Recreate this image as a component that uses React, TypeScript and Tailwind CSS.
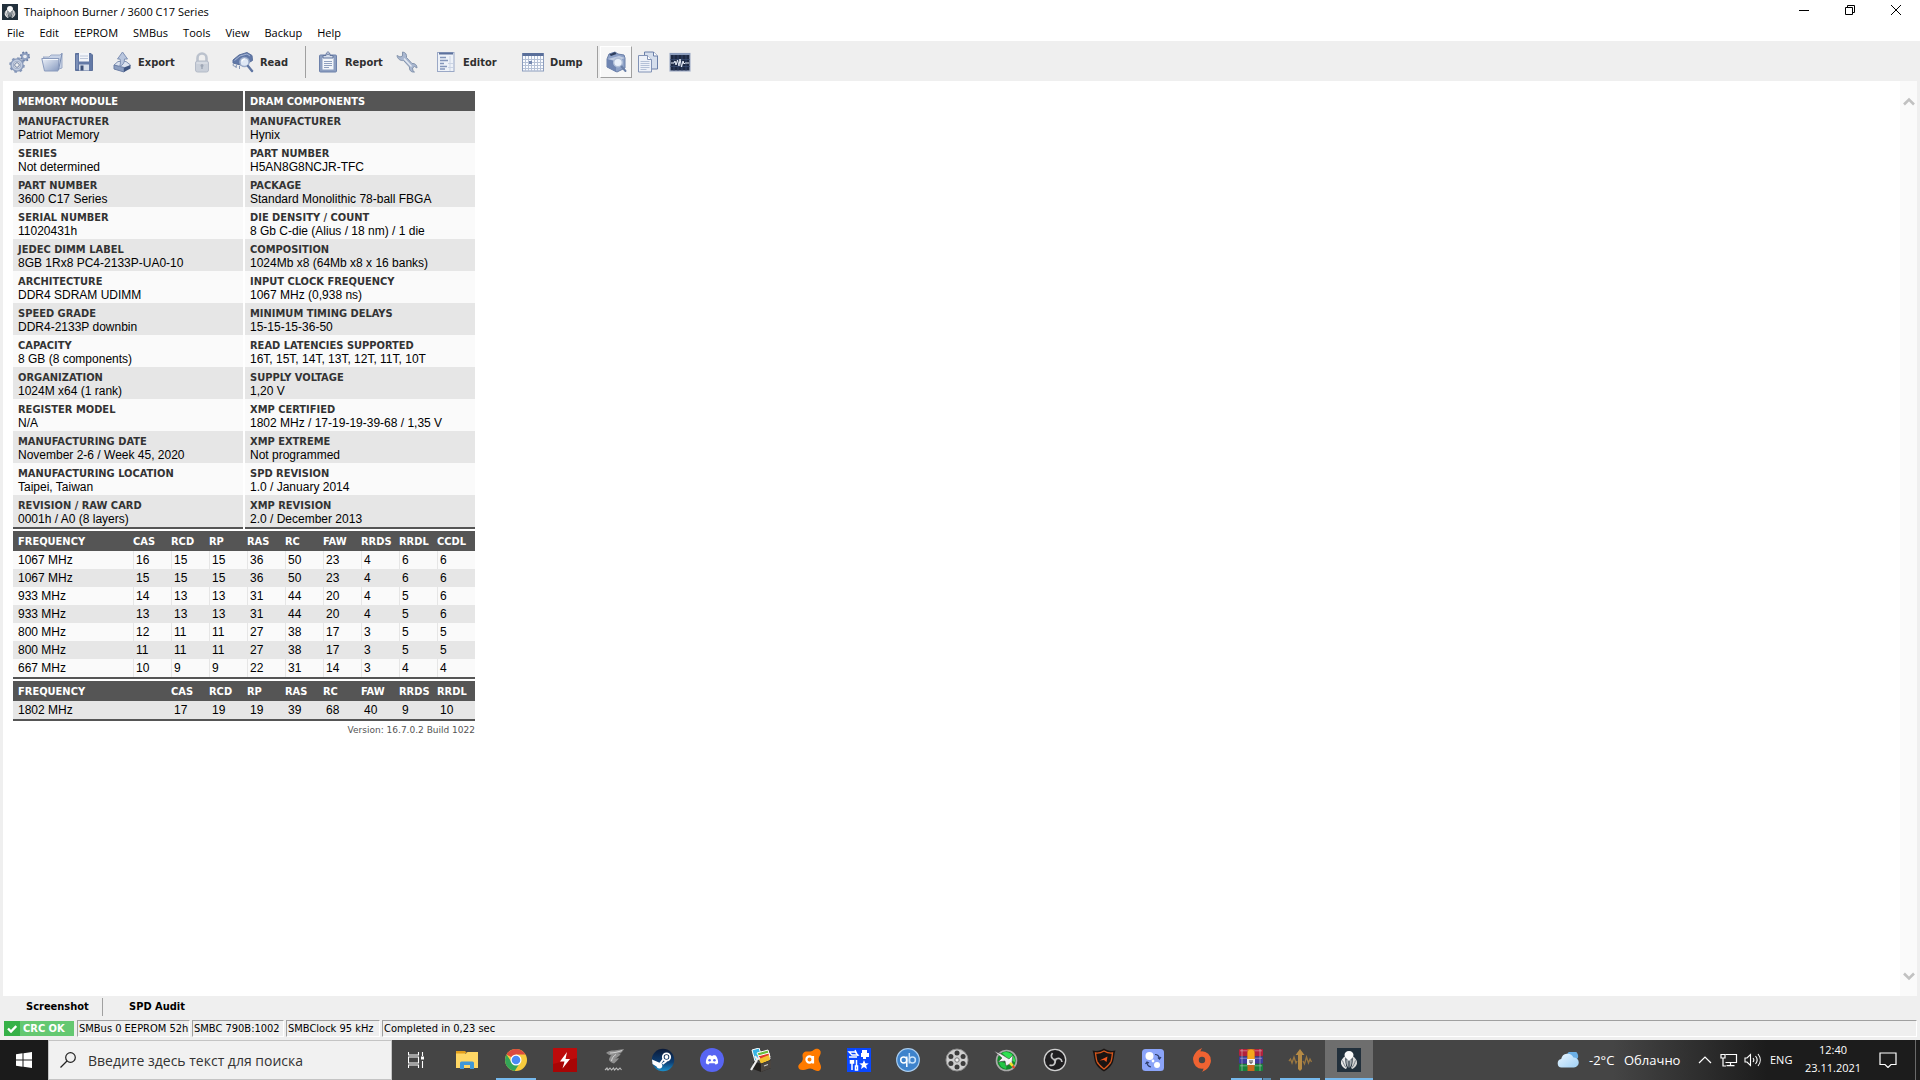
import type { ReactNode } from "react";
import clsx from "clsx";

const UI_FONT = "font-['Open_Sans','Noto_Sans',sans-serif]";
const TAHOMA = "font-['DejaVu_Sans_Condensed','DejaVu_Sans',sans-serif]";
const ARIAL = "font-['Liberation_Sans',Arial,sans-serif]";

const menuItems = ["File", "Edit", "EEPROM", "SMBus", "Tools", "View", "Backup", "Help"];

const memoryModule: [string, string][] = [
  ["MANUFACTURER", "Patriot Memory"],
  ["SERIES", "Not determined"],
  ["PART NUMBER", "3600 C17 Series"],
  ["SERIAL NUMBER", "11020431h"],
  ["JEDEC DIMM LABEL", "8GB 1Rx8 PC4-2133P-UA0-10"],
  ["ARCHITECTURE", "DDR4 SDRAM UDIMM"],
  ["SPEED GRADE", "DDR4-2133P downbin"],
  ["CAPACITY", "8 GB (8 components)"],
  ["ORGANIZATION", "1024M x64 (1 rank)"],
  ["REGISTER MODEL", "N/A"],
  ["MANUFACTURING DATE", "November 2-6 / Week 45, 2020"],
  ["MANUFACTURING LOCATION", "Taipei, Taiwan"],
  ["REVISION / RAW CARD", "0001h / A0 (8 layers)"],
];

const dramComponents: [string, string][] = [
  ["MANUFACTURER", "Hynix"],
  ["PART NUMBER", "H5AN8G8NCJR-TFC"],
  ["PACKAGE", "Standard Monolithic 78-ball FBGA"],
  ["DIE DENSITY / COUNT", "8 Gb C-die (Alius / 18 nm) / 1 die"],
  ["COMPOSITION", "1024Mb x8 (64Mb x8 x 16 banks)"],
  ["INPUT CLOCK FREQUENCY", "1067 MHz (0,938 ns)"],
  ["MINIMUM TIMING DELAYS", "15-15-15-36-50"],
  ["READ LATENCIES SUPPORTED", "16T, 15T, 14T, 13T, 12T, 11T, 10T"],
  ["SUPPLY VOLTAGE", "1,20 V"],
  ["XMP CERTIFIED", "1802 MHz / 17-19-19-39-68 / 1,35 V"],
  ["XMP EXTREME", "Not programmed"],
  ["SPD REVISION", "1.0 / January 2014"],
  ["XMP REVISION", "2.0 / December 2013"],
];

const jedecColumns = ["CAS", "RCD", "RP", "RAS", "RC", "FAW", "RRDS", "RRDL", "CCDL"];
const jedecTimings = [
  { frequency: "1067 MHz", values: [16, 15, 15, 36, 50, 23, 4, 6, 6] },
  { frequency: "1067 MHz", values: [15, 15, 15, 36, 50, 23, 4, 6, 6] },
  { frequency: "933 MHz", values: [14, 13, 13, 31, 44, 20, 4, 5, 6] },
  { frequency: "933 MHz", values: [13, 13, 13, 31, 44, 20, 4, 5, 6] },
  { frequency: "800 MHz", values: [12, 11, 11, 27, 38, 17, 3, 5, 5] },
  { frequency: "800 MHz", values: [11, 11, 11, 27, 38, 17, 3, 5, 5] },
  { frequency: "667 MHz", values: [10, 9, 9, 22, 31, 14, 3, 4, 4] },
];

const xmpColumns = ["CAS", "RCD", "RP", "RAS", "RC", "FAW", "RRDS", "RRDL"];
const xmpTimings = [{ frequency: "1802 MHz", values: [17, 19, 19, 39, 68, 40, 9, 10] }];

/* ---------- Logo ---------- */

function AppLogo({ className }: { className: string }) {
  return (
    <svg viewBox="0 0 24 24" className={className} aria-hidden="true">
      <rect width="24" height="24" fill="#22303c" />
      <path d="M8.500 8C5.500 10 3.500 12.500 4 15.500c.4 2 2 4 4.500 5.500l1.500-1C8.500 17 8 12.500 8.500 8z" fill="#e8e8e8" />
      <path d="M15.500 8c3 2 5 4.500 4.500 7.500-.4 2-2 4-4.500 5.500l-1.500-1c1.500-3 2-7.500 1.500-12z" fill="#d6d6d6" />
      <path d="M9.500 11c-.8 3 0 6.500 2 9V12zM14.500 11c.8 3 0 6.500-2 9V12z" fill="#a7adb2" />
      <path d="M12 3c2.800 0 4.500 1.800 4.500 4 0 2.500-2.500 4-4.500 6-2-2-4.500-3.500-4.500-6 0-2.200 1.700-4 4.500-4z" fill="#fafafa" />
      <path d="M5.500 12.500c1 3 2 5 3.500 7M18.500 12.500c-1 3-2 5-3.500 7" stroke="#56616b" strokeWidth=".8" fill="none" />
    </svg>
  );
}

/* ---------- Toolbar icons ---------- */

function ToolIcon({ children, faded }: { children: ReactNode; faded?: boolean }) {
  return (
    <svg viewBox="0 0 22 22" className={clsx("size-[22px] shrink-0", faded && "opacity-60")} fill="none" aria-hidden="true">
      {children}
    </svg>
  );
}

const GearsIcon = () => (
  <ToolIcon>
    <circle cx="8" cy="14" r="5" stroke="#8c9cbb" strokeWidth="3.500" />
    <circle cx="8" cy="14" r="6.800" stroke="#8496b8" strokeWidth="2" strokeDasharray="2.600 2.740" />
    <circle cx="8" cy="14" r="4.600" stroke="#c0cbdf" strokeWidth="1.600" />
    <circle cx="8" cy="14" r="2.300" fill="#efefef" stroke="#6a7da1" />
    <circle cx="16" cy="5.500" r="3" stroke="#8fa0c0" strokeWidth="2.400" />
    <circle cx="16" cy="5.500" r="4.300" stroke="#6a7ea5" strokeWidth="1.500" strokeDasharray="1.700 1.700" />
    <circle cx="16" cy="5.500" r="1.400" fill="#e8ecf4" />
  </ToolIcon>
);

const FolderIcon = () => (
  <ToolIcon>
    <path d="M2 6h6l2-2h9l2-2v15l-3 1z" fill="#c7d2e6" stroke="#9dabc7" />
    <path d="M.800 7.500H18L17 20H3.500z" fill="url(#folderFront)" stroke="#8a9bbd" />
    <path d="M2 8.500h15" stroke="#f4f7fb" />
    <path d="M21 2.500 17.500 19" stroke="#7b8eb3" />
    <defs>
      <linearGradient id="folderFront" x1="0" y1="0" x2="1" y2="1">
        <stop stopColor="#eef2f9" />
        <stop offset="1" stopColor="#8599bf" />
      </linearGradient>
    </defs>
  </ToolIcon>
);

const SaveIcon = () => (
  <ToolIcon>
    <path d="M2.500 2.500h15.500l1.500 1.500v15.500h-17z" fill="#6379a6" stroke="#5d719b" />
    <rect x="6" y="2" width="10" height="8.500" fill="#f3f5f9" />
    <path d="M7 5h8M7 7.500h8" stroke="#bcc6d9" />
    <rect x="6" y="13.500" width="10" height="6" fill="#d7deea" />
    <rect x="7.500" y="14.500" width="3" height="5" fill="#3d5078" />
    <path d="M4 4v14" stroke="#94a6c8" />
  </ToolIcon>
);

const ExportIcon = () => (
  <ToolIcon>
    <path d="m4 14 4-3.500h8l4.500 3.500-6.500 6.500z" fill="#dbe2ee" stroke="#8292b2" />
    <path d="m4 14 10 2.500V21L4 18z" fill="#8c9ec0" stroke="#6b7ea5" />
    <path d="m14 16.500 6.500-2.500v3.500L14 21z" fill="#3f5580" />
    <path d="M12.500 1 17.500 8h-3c0 4-1.500 6-5 7.500 1.200-2.500 1.200-4.500.5-7.500H7.500z" fill="#b9c6de" stroke="#7f91b4" />
  </ToolIcon>
);

const LockIcon = () => (
  <ToolIcon faded>
    <path d="M6.500 11V7a4.500 4.500 0 0 1 9 0v4" stroke="#9aa5b8" strokeWidth="2.600" />
    <rect x="4.500" y="10" width="13" height="11" rx="2" fill="#b0bacb" stroke="#8e9aaf" />
    <path d="M5.500 12h11" stroke="#dfe4ec" />
    <circle cx="11" cy="14.500" r="1.500" fill="#6a7890" />
    <path d="M11 15v3" stroke="#6a7890" strokeWidth="1.500" />
  </ToolIcon>
);

const ReadIcon = () => (
  <ToolIcon>
    <path d="M1 9 7 4l8-2.500 5 3 .5 5-7 4-5 .5L1 12z" fill="#6178a7" stroke="#5a709c" />
    <path d="m2.500 9.500 5.500-4.500L15 3l3 2" stroke="#a5b6d6" />
    <path d="m1.500 12-.5 2.500 3.500 1.500M4.500 13.500 4 17M7.500 15v3" stroke="#8797b6" />
    <circle cx="12.500" cy="11" r="4.600" fill="#dfe8f5" stroke="#9aabc9" strokeWidth="1.500" />
    <path d="M10 10.500a3 3 0 0 1 3-2.500" stroke="#fff" strokeWidth="1.200" />
    <path d="m16 15 4 5" stroke="#5f75a2" strokeWidth="2.400" strokeLinecap="round" />
  </ToolIcon>
);

const ReportIcon = () => (
  <ToolIcon>
    <rect x="2.500" y="4" width="17" height="17" rx="1" fill="#8c9ec0" stroke="#6d81aa" />
    <path d="M5.500 6.500h11v12h-11z" fill="#f3f6fa" />
    <path d="M7 10.500h8M7 12.500h8M7 14.500h8M7 16.500h5" stroke="#8fa0bf" />
    <path d="M6 7V4.500h3C9 2 10 1 11 1s2 1 2 3.500h3V7z" fill="#d4dcea" stroke="#60749d" />
    <circle cx="11" cy="3.300" r=".8" fill="#4e638e" />
  </ToolIcon>
);

const WrenchIcon = () => (
  <ToolIcon>
    <path
      d="M1 4.500 4 6l2.500-1L6.500 1c3 .2 4.500 2.500 4 5.500l5.500 6c3-.3 5 1.500 5 4.500l-2.500-1.500-2 1.500.500 3 1.500 1c-3.500.5-5.500-2-5-5l-6-6.500C4.500 10 1.500 8 1 4.500z"
      fill="#a9b7d0"
      stroke="#8494ad"
    />
    <path d="m8 7.500 7.500 8" stroke="#e6ebf3" strokeWidth="1.300" />
  </ToolIcon>
);

const EditorIcon = () => (
  <ToolIcon>
    <rect x="2.500" y="1.500" width="16.500" height="19" fill="#eef2f8" stroke="#9aa8c6" />
    <path d="M4 2.500h14" stroke="#5c719c" strokeWidth="2" />
    <path d="M5 6.500h6M5 9.500h8M5 12.500h4M5 15.500h7M5 18h5" stroke="#8496ba" strokeWidth="1.400" />
    <path d="M15 5v15M13 12.500h5M13 16.500h5" stroke="#cbd4e4" />
  </ToolIcon>
);

const DumpIcon = () => (
  <ToolIcon>
    <rect x=".5" y="2.500" width="21" height="17.500" fill="#fafcff" stroke="#8c9dbd" />
    <path d="M.5 3.500h21" stroke="#5a6f9a" strokeWidth="3" />
    <path d="M1 8.500h20M1 11.500h20M1 14.500h20M1 17.500h20M3.500 5v15M6.500 5v15M9.500 5v15M12.500 5v15M15.500 5v15M18.500 5v15" stroke="#b5c1d6" />
    <rect x="7" y="10" width="3" height="3" fill="#7488b0" />
  </ToolIcon>
);

const ScreenshotIcon = () => (
  <ToolIcon>
    <path d="m2 8 2-5 6-2L13 3l6 1 1 3v10l-8 4-10-5z" fill="#8ea2c8" stroke="#6b80a8" />
    <path d="m4.500 3.500 5.500-2.500L11.500 3 6 5z" fill="#2d3d5c" />
    <path d="m2 8 9 2.500V21L2 16z" fill="#6f85b2" />
    <path d="m3 8 8 2 9-3-6-2z" fill="#c2cee2" />
    <circle cx="13" cy="11.500" r="4.300" fill="#e9f0fa" stroke="#b2c0d8" strokeWidth="1.400" />
    <path d="m16.500 15.500 4 4.500" stroke="#6b80a8" strokeWidth="2" strokeLinecap="round" />
  </ToolIcon>
);

const CopyIcon = () => (
  <ToolIcon>
    <path d="M7.500 1h9l4 4v13h-13z" fill="#d5deec" stroke="#6a7fa8" />
    <path d="M16.500 1v4h4" fill="#fff" stroke="#6a7fa8" />
    <path d="M1.500 4.500h9l4 4V21h-13z" fill="#edf1f8" stroke="#8293b6" />
    <path d="M10.500 4.500v4h4" fill="#fff" stroke="#8293b6" />
    <path d="M3.500 10.500h9M3.500 12.500h9M3.500 14.500h9M3.500 16.500h9M3.500 18.500h6" stroke="#b4c1d7" />
  </ToolIcon>
);

const WaveIcon = () => (
  <ToolIcon>
    <rect x="1" y="2.500" width="20" height="17.500" fill="#1d2942" stroke="#a3b0c8" strokeWidth="1.200" />
    <path d="M1 3h20" stroke="#8c9dbd" strokeWidth="2" />
    <path d="M5 4v16M9 4v16M13 4v16M17 4v16M1 8.500h20M1 15.500h20" stroke="#3c4f75" strokeWidth=".7" />
    <path d="M2 12h3l1-2 1 4 1.500-5 1.500 6 1-7 1.500 8 1.500-6 1 3 1-1h4" stroke="#e8eef8" />
  </ToolIcon>
);

/* ---------- Window parts ---------- */

function TitleBar() {
  return (
    <header className="flex h-6 items-center bg-white pl-0.5">
      <AppLogo className="size-4" />
      <h1 className="ml-1.5 flex-1 text-[11px] leading-4">Thaiphoon Burner / 3600 C17 Series</h1>
      <div className="flex self-start pr-px">
        <button aria-label="Minimize" className="flex h-5 w-[46px] items-center justify-center">
          <svg viewBox="0 0 10 10" className="size-2.5" stroke="#000">
            <path d="M0 5.500h10" />
          </svg>
        </button>
        <button aria-label="Restore" className="flex h-5 w-[46px] items-center justify-center">
          <svg viewBox="0 0 10 10" className="size-2.5" fill="none" stroke="#000">
            <path d="M.5 2.500h7v7h-7zM2.500 2.500v-2h7v7h-2" />
          </svg>
        </button>
        <button aria-label="Close" className="flex h-5 w-[46px] items-center justify-center">
          <svg viewBox="0 0 10 10" className="size-2.5" stroke="#000">
            <path d="m0 0 10 10M10 0 0 10" />
          </svg>
        </button>
      </div>
    </header>
  );
}

function MenuBar() {
  return (
    <nav className="flex h-[17px] items-center gap-[15px] bg-white pl-[7px] text-[11px] leading-4">
      {menuItems.map((item) => (
        <button key={item}>{item}</button>
      ))}
    </nav>
  );
}

function ToolButton({ icon, label, text, className }: { icon: ReactNode; label: string; text?: boolean; className?: string }) {
  return (
    <button
      aria-label={label}
      className={clsx("flex h-8 shrink-0 items-center gap-1.5", text ? "pl-1.5" : "w-8 justify-center", className)}
    >
      {icon}
      {text && <span className="pt-0.5">{label}</span>}
    </button>
  );
}

function Toolbar() {
  return (
    <div className={clsx("flex h-10 items-center bg-[#efefef] pt-0.5 pl-1 text-[11px] font-bold text-[#2f2f2f]", TAHOMA)}>
      <ToolButton icon={<GearsIcon />} label="Options" />
      <ToolButton icon={<FolderIcon />} label="Open" />
      <ToolButton icon={<SaveIcon />} label="Save" />
      <ToolButton icon={<ExportIcon />} label="Export" text className="ml-1 w-20" />
      <ToolButton icon={<LockIcon />} label="Lock" className="ml-0.5" />
      <ToolButton icon={<ReadIcon />} label="Read" text className="ml-2 w-[79px]" />
      <div className="h-8 w-px bg-[#a0a0a0]" />
      <ToolButton icon={<ReportIcon />} label="Report" text className="ml-[5px] w-20" />
      <ToolButton icon={<WrenchIcon />} label="Tools" />
      <ToolButton icon={<EditorIcon />} label="Editor" text className="ml-1.5 w-20" />
      <ToolButton icon={<DumpIcon />} label="Dump" text className="ml-[7px] w-[81px]" />
      <div className="h-8 w-px bg-[#a0a0a0]" />
      <ToolButton
        icon={<ScreenshotIcon />}
        label="Screenshot view"
        className="ml-0.5 border border-white border-r-[#a0a0a0] border-b-[#a0a0a0] bg-[#f7f7f7]"
      />
      <ToolButton icon={<CopyIcon />} label="Copy" />
      <ToolButton icon={<WaveIcon />} label="Monitor" />
    </div>
  );
}

/* ---------- Report ---------- */

const HEAD_ROW = "h-5 bg-[#555] text-left text-[11px] leading-4 font-bold text-white";
const TABLE = "border-separate border-spacing-0 border-b-2 border-[#555]";

function InfoTable({ title, rows }: { title: string; rows: [string, string][] }) {
  return (
    <table className={clsx("flex-1", TABLE)}>
      <thead>
        <tr className={clsx(HEAD_ROW, TAHOMA)}>
          <th className="px-[5px] pt-0.5 pb-0">{title}</th>
        </tr>
      </thead>
      <tbody>
        {rows.map(([name, value]) => (
          <tr key={name} className="h-8 odd:bg-[#e6e6e6] even:bg-[#fafafa]">
            <td className="px-[5px] pt-1 pb-0 align-top">
              <div className={clsx("text-[11px] leading-[13px] font-bold text-[#333]", TAHOMA)}>{name}</div>
              <div className="text-xs leading-[14px]">{value}</div>
            </td>
          </tr>
        ))}
      </tbody>
    </table>
  );
}

type TimingRow = { frequency: string; values: number[] };

function TimingTable({ columns, rows, shadeFirst }: { columns: string[]; rows: TimingRow[]; shadeFirst?: boolean }) {
  return (
    <table className={clsx("w-full table-fixed", TABLE)}>
      <thead>
        <tr className={clsx(HEAD_ROW, TAHOMA)}>
          <th className="pt-0.5 pr-0 pb-0 pl-[5px]">FREQUENCY</th>
          {columns.map((column) => (
            <th key={column} className="w-[38px] px-0 pt-0.5 pb-0">
              {column}
            </th>
          ))}
        </tr>
      </thead>
      <tbody>
        {rows.map((row, index) => (
          <tr
            key={index}
            className={clsx("h-[18px] text-xs leading-4", (index % 2 === 0) === !!shadeFirst ? "bg-[#e6e6e6]" : "bg-[#fafafa]")}
          >
            <td className="py-0 pl-[5px]">{row.frequency}</td>
            {row.values.map((value, i) => (
              <td key={i} className="border-l border-[#e6e6e6] py-0 pl-0.5">
                {value}
              </td>
            ))}
          </tr>
        ))}
      </tbody>
    </table>
  );
}

function Report() {
  return (
    <main className="flex-1 overflow-hidden pt-2.5 pl-2.5">
      <div className={clsx("flex w-[462px] flex-col gap-0.5", ARIAL)}>
        <div className="flex gap-0.5">
          <InfoTable title="MEMORY MODULE" rows={memoryModule} />
          <InfoTable title="DRAM COMPONENTS" rows={dramComponents} />
        </div>
        <TimingTable columns={jedecColumns} rows={jedecTimings} />
        <TimingTable columns={xmpColumns} rows={xmpTimings} shadeFirst />
        <p className="text-right font-['DejaVu_Sans',sans-serif] text-[9px] leading-[14px] text-[#555]">Version: 16.7.0.2 Build 1022</p>
      </div>
    </main>
  );
}

function ScrollRail() {
  return (
    <div className="flex w-[17px] flex-col justify-between bg-[#fafafa] py-3">
      <button aria-label="Scroll up" className="flex h-4 items-center justify-center">
        <svg viewBox="0 0 12 9" className="h-[9px] w-3" fill="none" stroke="#c1c1c1" strokeWidth="2.600">
          <path d="m1 7.500 5-5 5 5" />
        </svg>
      </button>
      <button aria-label="Scroll down" className="flex h-4 items-center justify-center">
        <svg viewBox="0 0 12 9" className="h-[9px] w-3" fill="none" stroke="#c1c1c1" strokeWidth="2.600">
          <path d="m1 1.500 5 5 5-5" />
        </svg>
      </button>
    </div>
  );
}

const STATUS_PANEL = "h-[17px] shrink-0 border border-[#a0a0a0] border-r-white border-b-white pl-px whitespace-nowrap";

function StatusArea() {
  return (
    <footer className={clsx("bg-[#efefef] pb-[3px] text-[11px]", TAHOMA)}>
      <div className="flex h-6 items-center pt-0.5 pb-1 font-bold">
        <button className="w-[102px] pl-[26px] text-left">Screenshot</button>
        <div className="h-[18px] w-px bg-[#a0a0a0]" />
        <button className="pl-[26px]">SPD Audit</button>
      </div>
      <div className="flex gap-0.5 pr-[3px] pl-1 leading-4">
        <div className="mr-px flex h-[15px] w-[70px] self-center bg-[#64c871] leading-[15px] font-bold text-white">
          <span className="flex w-4 items-center justify-center bg-[#36b148]">
            <svg viewBox="0 0 10 8" className="h-2 w-2.5" fill="none" stroke="#fff" strokeWidth="2.400">
              <path d="m1 3.500 3 3L9.300 1" />
            </svg>
          </span>
          <span className="pl-[3px]">CRC OK</span>
        </div>
        <div className={clsx(STATUS_PANEL, "w-[113px]")}>SMBus 0 EEPROM 52h</div>
        <div className={clsx(STATUS_PANEL, "w-[92px]")}>SMBC 790B:1002</div>
        <div className={clsx(STATUS_PANEL, "w-[94px]")}>SMBClock 95 kHz</div>
        <div className={clsx(STATUS_PANEL, "flex-1")}>Completed in 0,23 sec</div>
      </div>
    </footer>
  );
}

/* ---------- Taskbar ---------- */

function AppIcon({ children }: { children: ReactNode }) {
  return (
    <svg viewBox="0 0 24 24" className="size-6" fill="none" aria-hidden="true">
      {children}
    </svg>
  );
}

const taskbarApps: { name: string; state?: "open" | "group" | "active"; icon: ReactNode }[] = [
  {
    name: "File Explorer",
    icon: (
      <AppIcon>
        <path d="M1 3h9l2 2h-2v4H1z" fill="#e39f1c" />
        <path d="M1 5.500h10L12.500 4H23v16H1z" fill="#ffd765" />
        <path d="M5 21v-6q0-1.500 1.500-1.500h11q1.500 0 1.500 1.500v6h-4v-4H9v4z" fill="#3f97d8" />
      </AppIcon>
    ),
  },
  {
    name: "Google Chrome",
    state: "open",
    icon: (
      <AppIcon>
        <circle cx="12" cy="12" r="11" fill="#f7cb3d" />
        <path d="M12 12 2.500 6.500A11 11 0 0 1 21.500 6.500H12z" fill="#dc4b3e" />
        <path d="M2.500 6.500a11 11 0 0 0 8.200 16.400L16.500 14l-9 0z" fill="#33a457" />
        <circle cx="12" cy="12" r="5.500" fill="#fff" />
        <circle cx="12" cy="12" r="4.300" fill="#4a8af4" />
      </AppIcon>
    ),
  },
  {
    name: "Flash",
    icon: (
      <AppIcon>
        <rect width="24" height="24" fill="#a80505" />
        <path d="M0 0h24v10L0 16z" fill="#bd0b0b" />
        <path d="m14 4-7 9.500h4.500L9.500 20.500 17 11h-4.500z" fill="#fff" />
      </AppIcon>
    ),
  },
  {
    name: "AORUS",
    icon: (
      <AppIcon>
        <path d="M4 5c2-2 5-2.500 8-2.500L22 1c-1.500 3-3.500 4.500-6 5 1 .2 2 0 3-.5-1.500 2.500-3.500 4-6 5l4-.3c-1.500 2-3 3.800-5 5.300-2-.5-4-1.500-5-3.500 0-2 1-3.500 2.500-4.500C7.500 7.500 6 6 4 5z" fill="#8f8f8f" />
        <path d="M8 5c4 0 8-1 12-2.500M9.500 13C10 10 11.500 8 14 6.500" stroke="#d8d8d8" strokeWidth=".9" />
        <path d="m3 22 2-2 1 2 2-2 1.500 2 2-2 1 2 2-2 1.500 2 2-2 1.500 2" stroke="#b8b8b8" strokeWidth="1.100" />
      </AppIcon>
    ),
  },
  {
    name: "Steam",
    icon: (
      <AppIcon>
        <circle cx="12" cy="12" r="11.200" fill="url(#steam)" />
        <circle cx="15.500" cy="9" r="3.700" stroke="#fff" strokeWidth="1.800" />
        <circle cx="15.500" cy="9" r="1.900" fill="#fff" />
        <path d="m12.500 11-3 4M15.500 13l-4 3" stroke="#fff" strokeWidth="2" />
        <path d="m1 11.500 7 3a3 3 0 1 1-2.500 4L1.500 16z" fill="#fff" />
        <defs>
          <linearGradient id="steam" x1="0" y1="0" x2="0" y2="1">
            <stop stopColor="#0b1a38" />
            <stop offset=".6" stopColor="#0d3f74" />
            <stop offset="1" stopColor="#1a90cc" />
          </linearGradient>
        </defs>
      </AppIcon>
    ),
  },
  {
    name: "Discord",
    icon: (
      <AppIcon>
        <circle cx="12" cy="12" r="12" fill="#5865f2" />
        <path d="M8.300 7.500 10.500 7l.4.800h2.200l.4-.8 2.200.5c1.800 2.200 2.600 5 2.400 7.700-1 .8-2 1.200-2.700 1.300l-.8-1.200H9.400l-.8 1.200c-.7-.1-1.700-.5-2.700-1.300-.2-2.700.6-5.500 2.400-7.700z" fill="#fff" />
        <circle cx="9.600" cy="12.300" r="1.300" fill="#5865f2" />
        <circle cx="14.400" cy="12.300" r="1.300" fill="#5865f2" />
      </AppIcon>
    ),
  },
  {
    name: "Total Uninstall",
    icon: (
      <AppIcon>
        <path d="m3 2 7-2 3 9-7 4z" fill="#37b5e6" stroke="#fff" />
        <path d="m8 5 11-3 2 7-9 4z" fill="#6abf3a" stroke="#fff" />
        <path d="m9 8 11-3 1 6-9 3z" fill="#e0392b" stroke="#fff" />
        <path d="m10 11 10-4 1 5-9 4z" fill="#f2c12e" />
        <path d="m4 14 8 1.500L22 12v8l-10 4-8-3z" fill="#24211f" />
        <path d="m12 16 10-4v8l-10 4z" fill="#4a4541" />
        <path d="m15 18 4-1.500" stroke="#ccc" strokeWidth="1.200" />
        <path d="m2 22 6-10" stroke="#eee" strokeWidth="2.200" />
        <path d="m6 8 2 3 3-1" stroke="#eee" strokeWidth="2" />
      </AppIcon>
    ),
  },
  {
    name: "Avast",
    icon: (
      <AppIcon>
        <path
          d="M6.500 4C9 2.500 12 4.500 15 2.500 17 .5 20 0 21.800 2c1.800 2 .7 4.500-.5 6.500-1.300 2.500-.5 4.500.7 7 1.500 3 1.500 5.500-.5 7-2.500 1.500-5-.5-7-1.500-3-1.500-6 .5-9 1C2.500 22.500.5 21 .3 19c-.2-2.500 2.200-3.500 3.700-5.500C5.500 11 4.500 9.500 4.500 7.500c0-1.500.7-2.800 2-3.500z"
          fill="#ff7b00"
        />
        <circle cx="11.500" cy="11.500" r="3.100" stroke="#fff" strokeWidth="2.200" />
        <path d="M15 8v7.500" stroke="#fff" strokeWidth="2.200" />
      </AppIcon>
    ),
  },
  {
    name: "Tweaker",
    icon: (
      <AppIcon>
        <rect width="24" height="24" fill="#0a48ff" />
        <path d="M2 4h6l3 3H5zM2 9h8M8 2l3 6" stroke="#fff" strokeWidth="1.300" />
        <path d="M15 2h5v3h2v4h-3v2h-3V9h-2V5h1z" fill="#fff" />
        <path d="M5 12v10M3.500 12v3h3v-3M9.500 12v6M8.500 18h2v4h-2z" stroke="#fff" strokeWidth="1.500" />
        <path d="m17 12 1.300 3.200 3.400.2-2.600 2.200.9 3.400-3-1.900-3 1.900.9-3.400-2.600-2.200 3.400-.2z" fill="#fff" />
      </AppIcon>
    ),
  },
  {
    name: "qBittorrent",
    icon: (
      <AppIcon>
        <circle cx="12" cy="12" r="11.300" fill="#3e83cc" stroke="#a9cdf0" strokeWidth="1.200" />
        <circle cx="7.700" cy="12" r="3" stroke="#fff" strokeWidth="1.500" />
        <path d="M10.800 8.500V19" stroke="#fff" strokeWidth="1.500" />
        <circle cx="16.400" cy="12" r="3" stroke="#c8e2fb" strokeWidth="1.500" />
        <path d="M13.300 5v10.500" stroke="#c8e2fb" strokeWidth="1.500" />
      </AppIcon>
    ),
  },
  {
    name: "Media Player",
    icon: (
      <AppIcon>
        <circle cx="12" cy="12" r="11" fill="#cfcfcf" />
        <circle cx="12" cy="12" r="11" stroke="#8d8d8d" />
        <circle cx="12" cy="5" r="2.500" fill="#3c3c3c" />
        <circle cx="12" cy="19" r="2.500" fill="#3c3c3c" />
        <circle cx="5.900" cy="8.500" r="2.500" fill="#3c3c3c" />
        <circle cx="18.100" cy="8.500" r="2.500" fill="#3c3c3c" />
        <circle cx="5.900" cy="15.500" r="2.500" fill="#3c3c3c" />
        <circle cx="18.100" cy="15.500" r="2.500" fill="#3c3c3c" />
        <circle cx="12" cy="12" r="2.200" fill="#f0f0f0" stroke="#777" />
      </AppIcon>
    ),
  },
  {
    name: "Game Booster",
    icon: (
      <AppIcon>
        <circle cx="12.500" cy="12.500" r="10" fill="#128a2a" stroke="#a9a9a9" strokeWidth="1.600" />
        <path d="M8 5a9 9 0 0 1 13 9l-7-3z" fill="#2fe052" />
        <path d="M5 13a8 8 0 0 0 7 8l1-5z" fill="#24c544" />
        <path d="m0 3 7 3 8 5 4-4-1 7 1 3-3-1-4 2-1-5-7 1 4-4z" fill="#f4f4f4" stroke="#444" strokeWidth=".6" />
        <path d="m16 15 3 3" stroke="#f0e02c" strokeWidth="2.500" />
        <path d="m18.500 18 2 2" stroke="#e5472a" strokeWidth="2" />
      </AppIcon>
    ),
  },
  {
    name: "OBS Studio",
    icon: (
      <AppIcon>
        <circle cx="12" cy="12" r="10.700" fill="#1f1e20" stroke="#d0d0d0" strokeWidth="1.300" />
        <path d="M12 12c-4-1-4.500-4.500-2.500-7M12 12c3-3 6.500-1.500 7 2M12 12c1 4-2 6.500-5.500 5" stroke="#c4c4c4" strokeWidth="1.700" />
        <circle cx="12" cy="12" r="1.500" fill="#c4c4c4" />
      </AppIcon>
    ),
  },
  {
    name: "Shield",
    icon: (
      <AppIcon>
        <path d="M.5 2.500C5 3.500 9 2.500 12 .5c3 2 7 3 11.500 2C22 6 22.500 9 21 14c-2 5-6 7.500-9 9.500C9 21.500 5 19 3 14 1.500 9 2 6 .5 2.500z" fill="#1a1412" />
        <path d="M3.500 5c3.500.5 6-.5 8.500-2 2.500 1.500 5 2.500 8.500 2-.5 3-.5 6-1.500 8.500-1.500 3.500-4.500 5.500-7 7.500-2.500-2-5.500-4-7-7.500C4 11 4 8 3.500 5z" stroke="#d9571c" strokeWidth="1.300" />
        <path d="m7.500 12.500 8-4-1 5.500-2.500-2z" fill="#f0561d" />
      </AppIcon>
    ),
  },
  {
    name: "Converter",
    icon: (
      <AppIcon>
        <rect x="1" y="1" width="22" height="22" rx="3.500" fill="#8ba4f9" />
        <circle cx="8.500" cy="8" r="4" fill="#fff" />
        <circle cx="16" cy="17" r="3" fill="#fff" />
        <circle cx="12" cy="13" r="1.400" fill="#fff" />
        <path d="M14 6.500c2.500 0 4 1.500 4.500 4M17 9.500l1.500 1.500 1.500-2M6 14c0 3 1.500 4.500 4 5M4.500 16 6 14l2 1" stroke="#2d3c68" strokeWidth="1.200" />
      </AppIcon>
    ),
  },
  {
    name: "Origin",
    icon: (
      <AppIcon>
        <circle cx="12" cy="12" r="6" stroke="#ef6332" strokeWidth="5.600" />
        <path d="M3.200 12C3 7 6.500 2 12.300 0c-1.500 1.500-2 3-1.500 4.500L8 10z" fill="#ef6332" />
        <path d="M20.800 12c.2 5-3.300 10-9.100 12 1.500-1.500 2-3 1.500-4.500L16 14z" fill="#ef6332" />
      </AppIcon>
    ),
  },
  {
    name: "WinRAR",
    state: "group",
    icon: (
      <AppIcon>
        <rect y="1" width="24" height="7" rx="1" fill="#b3213c" />
        <rect y="8.500" width="24" height="7" rx="1" fill="#3d3c9e" />
        <rect y="16" width="24" height="7" rx="1" fill="#17803c" />
        <path d="M1 2.800h22M1 10.300h22M1 17.800h22" stroke="#fff" strokeOpacity=".35" />
        <path d="M3 1v22M21 1v22" stroke="#d9d9d9" strokeOpacity=".5" />
        <rect x="8.500" y="1" width="7" height="22" fill="#c96a1e" />
        <path d="M8.500 5a3.500 3.500 0 0 1 7 0v6h-7z" fill="#f5a81c" />
        <rect x="8" y="11" width="8" height="6" fill="#f4f4f4" />
        <path d="M11 12v3h2v-3" stroke="#444" />
      </AppIcon>
    ),
  },
  {
    name: "Monitor",
    state: "open",
    icon: (
      <AppIcon>
        <path d="m12 1 4.500 6H14v14l-2 2-2-2V7H7.500z" fill="#b58a45" />
        <path d="m1 13 1.500-2L4 15l2-6 2 6 1-2M15 13l1.500 3 2-7 2 6 1.500-4 1.500 3" stroke="#9a7740" strokeWidth="1.300" />
      </AppIcon>
    ),
  },
  { name: "Thaiphoon Burner", state: "active", icon: <AppLogo className="size-6" /> },
];

function TaskbarButton({ name, state, icon }: (typeof taskbarApps)[number]) {
  return (
    <button aria-label={name} className={clsx("flex h-10 w-12 shrink-0 flex-col items-center pt-2", state === "active" && "bg-[#6e6e6e]")}>
      {icon}
      {state && (
        <span className={clsx("mt-auto flex h-0.5 gap-px", state === "active" ? "w-12" : "w-10")}>
          <span className="flex-1 bg-[#76b9ed]" />
          {state === "group" && <span className="w-2 bg-[#5a8bb0]" />}
        </span>
      )}
    </button>
  );
}

function Taskbar() {
  return (
    <div className="flex h-10 items-center bg-[linear-gradient(90deg,#454545_84%,#1c1c1c_92%)] text-white">
      <button aria-label="Start" className="flex h-10 w-12 shrink-0 items-center justify-center bg-[#1b1b1b]">
        <svg viewBox="0 0 16 16" className="size-4" fill="#fff">
          <path d="M0 2.200 6.500 1.300v6.200H0zM7.500 1.200 16 0v7.500H7.500zM0 8.500h6.500v6.200L0 13.800zM7.500 8.500H16V16l-8.500-1.200z" />
        </svg>
      </button>
      <label className="flex h-10 w-[344px] shrink-0 items-center border border-[#c4c4c4] bg-[#f1f1f1] pl-[11px] text-[#333]">
        <svg viewBox="0 0 16 16" className="size-4 shrink-0" fill="none" stroke="#222" strokeWidth="1.200">
          <circle cx="10.500" cy="5.500" r="4.800" />
          <path d="M7 9 .5 15.500" />
        </svg>
        <input
          type="text"
          aria-label="Поиск"
          placeholder="Введите здесь текст для поиска"
          className="ml-3 w-full bg-transparent pt-0.5 text-sm outline-none placeholder:text-[#333]"
        />
      </label>
      <button aria-label="Task View" className="mr-[3px] flex h-10 w-12 shrink-0 items-center justify-center">
        <svg viewBox="0 0 16 16" className="size-4" fill="none" stroke="#fff" strokeWidth="1.100">
          <path d="M.5 0v3h10V0M.5 16v-3h10v3M.5 5h10v6H.5zM14.500 0v4M14.500 9v7" />
          <path d="M13 4.500h3v3h-3z" fill="#fff" stroke="none" />
        </svg>
      </button>
      <div className="flex flex-1 gap-px">
        {taskbarApps.map((app) => (
          <TaskbarButton key={app.name} {...app} />
        ))}
      </div>
      <button className="flex shrink-0 items-center text-[13px]">
        <svg viewBox="0 0 22 16" className="mr-2.5 h-4 w-[22px]">
          <defs>
            <linearGradient id="cloud" x1="0" y1="0" x2="1" y2="1">
              <stop stopColor="#e8f5ff" />
              <stop offset="1" stopColor="#9fd0f5" />
            </linearGradient>
          </defs>
          <path d="M10 3a5.500 5.500 0 0 1 11 2.500l-2 3z" fill="#6aaee4" />
          <path d="M4.500 15.500a4.300 4.300 0 0 1-.3-8.500A6.500 6.500 0 0 1 16.500 5.500 5 5 0 0 1 17 15.500z" fill="url(#cloud)" />
        </svg>
        <span className="w-[35px] pt-0.5 text-left">-2°C</span>
        <span className="w-[58px] pt-0.5 text-left">Облачно</span>
      </button>
      <button aria-label="Show hidden icons" className="ml-4 shrink-0">
        <svg viewBox="0 0 14 8" className="h-2 w-3.5" fill="none" stroke="#fff" strokeWidth="1.200">
          <path d="m1 7 6-6 6 6" />
        </svg>
      </button>
      <button aria-label="Network" className="ml-2 shrink-0">
        <svg viewBox="0 0 18 14" className="h-3.5 w-[18px]" fill="none" stroke="#fff" strokeWidth="1.200">
          <path d="M5.500 1.500h11v8h-11M10.500 9.500v3M6.500 12.700h8" />
          <path d="M1 1.500h4v3.500H1zM3 5v8h3" />
        </svg>
      </button>
      <button aria-label="Volume" className="ml-1.5 shrink-0">
        <svg viewBox="0 0 18 14" className="h-3.5 w-[18px]" fill="none" stroke="#fff" strokeWidth="1.100">
          <path d="M1 5h2l3.500-3.500v11L3 9H1zM9 5c1 1.200 1 2.800 0 4M11.500 3c2 2.400 2 5.600 0 8M14 1c3 3.600 3 8.400 0 12" />
        </svg>
      </button>
      <button className="ml-2 w-[34px] shrink-0 text-left text-[11px]">ENG</button>
      <button className="w-[58px] shrink-0 pb-0.5 text-center text-[11px] leading-[18px]">
        12:40
        <br />
        23.11.2021
      </button>
      <button aria-label="Notifications" className="ml-[17px] shrink-0">
        <svg viewBox="0 0 18 16" className="h-4 w-[18px]" fill="none" stroke="#fff" strokeWidth="1.200">
          <path d="M1 1h16v11.500h-5L9 15.500l-3-3H1z" />
        </svg>
      </button>
      <button aria-label="Show desktop" className="ml-[18px] h-10 w-[5px] shrink-0 border-l border-[#6a6a6a]" />
    </div>
  );
}

export default function App() {
  return (
    <div className={clsx("flex h-screen flex-col overflow-hidden bg-[#efefef] text-black", UI_FONT)}>
      <TitleBar />
      <MenuBar />
      <Toolbar />
      <div className="mx-[3px] flex min-h-0 flex-1 bg-white">
        <Report />
        <ScrollRail />
      </div>
      <StatusArea />
      <Taskbar />
    </div>
  );
}
